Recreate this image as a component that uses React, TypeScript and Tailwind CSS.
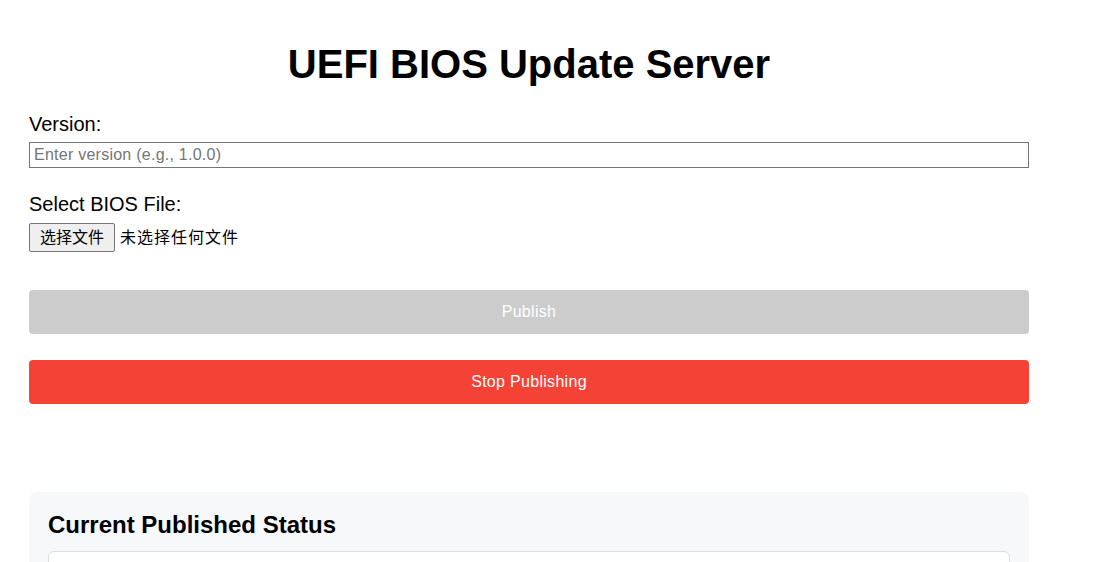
export default function App() {
  return (
    <div className="min-h-screen bg-white text-black font-['Liberation_Sans','Noto_Sans_CJK_SC',sans-serif]">
      <div className="ml-[29px] w-[1000px]">
        <h1 className="pt-[41px] text-center text-[40px] font-bold leading-[46px]">
          UEFI BIOS Update Server
        </h1>

        <label className="mt-[26px] block text-[20px] leading-[23px]">Version:</label>
        <input
          type="text"
          placeholder="Enter version (e.g., 1.0.0)"
          className="mt-[6px] block h-[26px] w-full border border-[#767676] px-[4px] text-[16px] tracking-[0.25px] placeholder:text-[#757575] focus:outline-none"
        />

        <label className="mt-[25px] block text-[20px] leading-[23px]">Select BIOS File:</label>
        <div className="mt-[7px] flex items-center gap-[5px] text-[16px]">
          <button className="h-[29px] rounded-[2px] border border-[#767676] bg-[#efefef] px-[10px] leading-none">
            选择文件
          </button>
          <span className="tracking-[1px]">未选择任何文件</span>
        </div>

        <button
          disabled
          className="mt-[38px] block h-[44px] w-full rounded-[4px] bg-[#cccccc] text-[16px] tracking-[0.3px] text-white"
        >
          Publish
        </button>
        <button className="mt-[26px] block h-[44px] w-full rounded-[4px] bg-[#f44336] text-[16px] tracking-[0.3px] text-white">
          Stop Publishing
        </button>

        <section className="mt-[88px] rounded-[8px] bg-[#f7f8fa] px-[19px] pb-[20px] pt-[19px]">
          <h2 className="text-[24px] font-bold leading-[28px]">Current Published Status</h2>
          <div className="mt-[12px] h-[120px] rounded-[6px] border border-[#dddddd] bg-white" />
        </section>
      </div>
    </div>
  );
}
